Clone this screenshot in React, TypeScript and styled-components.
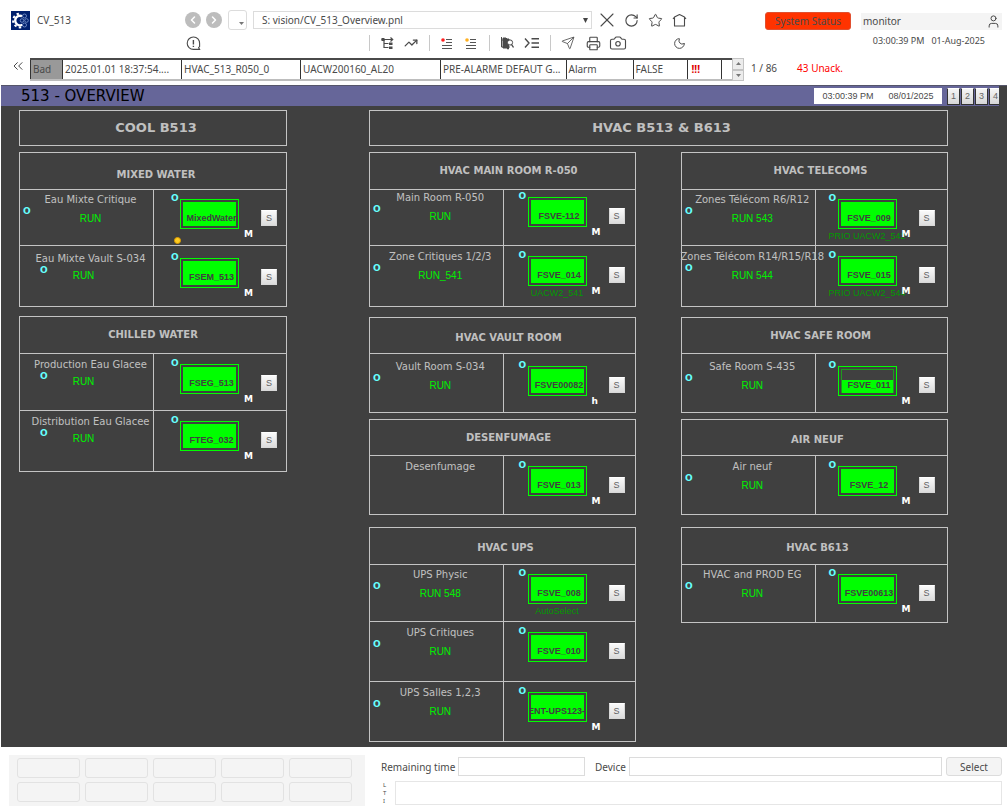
import React from "react";
import styled, { createGlobalStyle } from "styled-components";
import {
  Camera,
  ChevronLeft,
  ChevronRight,
  ChevronsLeft,
  Moon,
  Printer,
  RotateCw,
  Send,
  Star,
  TrendingUp,
  User,
  X,
} from "lucide-react";

const ui = `"Noto Sans", "Open Sans", sans-serif`;
const wide = `"DejaVu Sans", sans-serif`;
const plain = `"Liberation Sans", Arial, sans-serif`;

const color = {
  ink: "#4a4a4a",
  panel: "#404040",
  line: "#c4c4c4",
  label: "#c0c0c0",
  run: "#00f000",
  green: "#00ff00",
  note: "#009a00",
  cyan: "#66ffff",
  bar: "#666699",
};

const GlobalStyle = createGlobalStyle`
  * { box-sizing: border-box; }
  body { margin: 0; background: #fff; color: ${color.ink}; font: 10px/14px ${ui}; }
  button, input, select { font: inherit; color: inherit; margin: 0; padding: 0; }
  h1, h2, h3 { margin: 0; }
  svg { flex: none; }
`;

const Page = styled.div`
  min-width: 960px;
`;

/* ---------- top bar ---------- */

const Header = styled.header`
  display: grid;
  grid-template-columns: 174px 1fr 237px;
  column-gap: 0;
  padding: 9px 6px 0 11px;
`;

const Brand = styled.div`
  display: flex;
  align-items: center;
  gap: 7px;
  height: 22px;
`;

const Middle = styled.div`
  display: flex;
  flex-direction: column;
  gap: 1px;
  padding-right: 78px;
`;

const BarRow = styled.div`
  display: flex;
  align-items: center;
  height: 22px;
`;

const RoundButton = styled.button`
  display: flex;
  align-items: center;
  justify-content: center;
  width: 16px;
  height: 16px;
  margin-right: 5px;
  border: 0;
  border-radius: 50%;
  background: #bdbdbd;
  color: #fff;
`;

const HistoryButton = styled.button`
  display: flex;
  align-items: flex-end;
  justify-content: flex-end;
  width: 19px;
  height: 20px;
  margin: 0 6px 0 1px;
  padding: 0 2px 4px 0;
  border: 1px solid #dcdcdc;
  border-radius: 3px;
  background: #fff;
`;

const PathBox = styled.div`
  position: relative;
  flex: 1;
  margin-right: 7px;
`;

const PathSelect = styled.select`
  appearance: none;
  display: block;
  width: 100%;
  height: 18px;
  padding: 0 16px 0 8px;
  border: 1px solid #dcdcdc;
  border-radius: 0;
  background: #fff;
`;

const PathCaret = styled.svg`
  position: absolute;
  right: 4px;
  top: 7px;
  pointer-events: none;
`;

const IconButton = styled.button`
  display: flex;
  align-items: center;
  justify-content: center;
  flex: none;
  width: 16px;
  height: 16px;
  border: 0;
  background: none;
`;

const IconGroup = styled.div<{ $gap: number }>`
  display: flex;
  align-items: center;
  gap: ${(p) => p.$gap}px;
`;

const Tools = styled.div`
  display: flex;
  align-items: center;
  margin-left: auto;
`;

const ToolGroup = styled(IconGroup)`
  padding: 0 10px 0 9px;
  border-left: 1px solid #c8c8c8;
`;

const MoonSlot = styled.div`
  margin-left: 35px;
`;

const Session = styled.div`
  display: flex;
  flex-direction: column;
`;

const SessionRow = styled.div`
  display: flex;
  align-items: center;
  gap: 10px;
  height: 24px;
`;

const StatusButton = styled.button`
  flex: 0 0 86px;
  height: 18px;
  border: 1px solid #e05030;
  border-radius: 3px;
  background: #ff3300;
  white-space: nowrap;
`;

const UserBox = styled.div`
  display: flex;
  align-items: center;
  flex: 1;
  min-width: 0;
  height: 17px;
  padding: 0 1px 0 2px;
  background: #f4f4f4;
`;

const UserInput = styled.input`
  flex: 1;
  min-width: 0;
  border: 0;
  background: none;
`;

const Clock = styled.div`
  display: flex;
  justify-content: flex-end;
  gap: 7px;
  padding-right: 17px;
  font-size: 9px;
  line-height: 16px;
`;

/* ---------- alarm line ---------- */

const AlarmBar = styled.div`
  display: flex;
  align-items: flex-start;
  margin: 4px 0;
  padding-left: 10px;
`;

const AlarmList = styled.div`
  display: flex;
  flex: 1;
  height: 23px;
  margin-left: 4px;
  border-top: 2px solid #4a4a4a;
  border-bottom: 2px solid #bdbdbd;
`;

const AlarmTable = styled.table`
  flex: 1;
  height: 19px;
  width: 100%;
  table-layout: fixed;
  border-collapse: collapse;
`;

const AlarmCell = styled.td<{ $tone?: "bad" | "alert" }>`
  padding: 0 2px 1px;
  border-left: 1px solid #333;
  overflow: hidden;
  white-space: nowrap;
  text-overflow: ellipsis;
  background: ${(p) => (p.$tone === "bad" ? "#999" : "#fff")};
  color: ${(p) => (p.$tone === "alert" ? "#e00000" : color.ink)};
  font-weight: ${(p) => (p.$tone === "alert" ? "bold" : "normal")};
  text-indent: ${(p) => (p.$tone === "alert" ? "2px" : "0")};
`;

const Stepper = styled.div`
  display: flex;
  flex-direction: column;
  width: 12px;
  height: 23px;
  margin-top: -2px;
`;

const StepButton = styled.button`
  display: flex;
  align-items: center;
  justify-content: center;
  flex: 1;
  border: 1px solid #c4c4c4;
  background: #ececec;
`;

const AlarmCount = styled.div`
  display: flex;
  gap: 20px;
  flex: 0 0 264px;
  padding: 3px 0 0 7px;
`;

const Unacked = styled.span`
  color: #ff0000;
`;

/* ---------- process panel ---------- */

const Panel = styled.main`
  margin: 0 1px;
  background: ${color.panel};
  border-top: 1px solid #55556a;
`;

const TitleBar = styled.div`
  display: flex;
  align-items: center;
  height: 20px;
  margin-right: 8px;
  padding-left: 20px;
  background: ${color.bar};
  overflow: hidden;
`;

const PanelTitle = styled.h1`
  flex: 1;
  color: #000;
  font: 15px/20px ${wide};
`;

const PanelClock = styled.div`
  display: flex;
  align-items: center;
  justify-content: center;
  gap: 15px;
  width: 128px;
  height: 16px;
  margin-right: 5px;
  background: #fff;
  font: 9px/16px ${plain};
`;

const PageButtons = styled.div`
  display: flex;
  gap: 1px;
  width: 52px;
  overflow: hidden;
`;

const PageButton = styled.button`
  flex: 0 0 13px;
  height: 17px;
  border: 1px solid #333;
  border-top-color: #fff;
  background: linear-gradient(#f4f4f4, #d8d8d8);
  color: #666;
  font: 9px/14px ${plain};
`;

const Canvas = styled.div`
  display: grid;
  grid-template-columns: 268fr 579fr;
  column-gap: 82px;
  padding: 4px 59px 5px 18px;
`;

const Area = styled.section`
  display: flex;
  flex-direction: column;
  gap: 6px;
  min-width: 0;
`;

const AreaTitle = styled.h2`
  height: 36px;
  padding-left: 6px;
  border: 1px solid ${color.line};
  color: ${color.label};
  font: bold 13px/34px ${wide};
  text-align: center;
`;

const Columns = styled.div`
  display: grid;
  grid-template-columns: 1fr 1fr;
  column-gap: 45px;
`;

const Column = styled.div`
  display: flex;
  flex-direction: column;
  min-width: 0;
`;

const Card = styled.article<{ $before: number }>`
  margin-top: ${(p) => p.$before}px;
  border: 1px solid ${color.line};
`;

const CardTitle = styled.h3<{ $height: number; $lead: number; $drop: number }>`
  display: flex;
  align-items: center;
  justify-content: center;
  height: ${(p) => p.$height}px;
  padding: ${(p) => p.$drop}px 0 0 ${(p) => p.$lead}px;
  color: ${color.label};
  font: bold 10px/14px ${wide};
`;

const UnitRow = styled.div<{ $height: number }>`
  display: flex;
  min-height: ${(p) => p.$height}px;
  border-top: 1px solid ${color.line};
`;

const NameCell = styled.div<{ $inset: number }>`
  position: relative;
  display: flex;
  flex-direction: column;
  align-items: center;
  flex: 0 0 50%;
  width: 50%;
  padding: ${(p) => p.$inset - 6}px 0 0 8px;
`;

const UnitName = styled.span`
  position: relative;
  z-index: 1;
  color: ${color.label};
  font: 10px/14px ${wide};
  white-space: nowrap;
`;

const UnitState = styled.span<{ $near: boolean }>`
  margin-top: ${(p) => (p.$near ? 3 : 5)}px;
  padding-right: ${(p) => (p.$near ? 14 : 0)}px;
  color: ${color.run};
  font: 10px/14px ${plain};
`;

const Flag = styled.span`
  position: absolute;
  color: ${color.cyan};
  font: bold 9px/12px ${wide};
`;

const NameFlag = styled(Flag)<{ $inset: number; $near: boolean }>`
  left: ${(p) => (p.$near ? 20 : 3)}px;
  top: ${(p) => p.$inset + 6}px;
`;

const DeviceCell = styled.div<{ $inset: number; $indent: number }>`
  display: flex;
  align-items: flex-start;
  flex: 1;
  min-width: 0;
  padding: ${(p) => p.$inset}px 0 0 ${(p) => p.$indent}px;
  border-left: 1px solid ${color.line};
`;

const Device = styled.div`
  position: relative;
  flex: none;
`;

const DeviceFrame = styled.div`
  width: 59px;
  height: 30px;
  padding: 2px;
  border: 1px solid ${color.green};
  overflow: hidden;
`;

const DeviceFill = styled.div<{ $half: boolean }>`
  display: flex;
  justify-content: center;
  height: 24px;
  padding: 8px 0 0 4px;
  border: solid ${(p) => (p.$half ? "#1e9a1e" : color.green)};
  border-width: 1px 1px 0;
  background: ${(p) =>
    p.$half ? `linear-gradient(${color.panel} 10px, ${color.green} 10px)` : color.green};
  color: ${color.panel};
  font: bold 9px/14px ${plain};
  white-space: nowrap;
`;

const DeviceFlag = styled(Flag)`
  left: -9px;
  top: -7px;
`;

const Mode = styled.span`
  position: absolute;
  left: 64px;
  top: 29px;
  z-index: 1;
  color: #fff;
  font: bold 9px/12px ${wide};
`;

const Note = styled.span`
  position: absolute;
  left: -10px;
  right: -10px;
  top: 30px;
  color: ${color.note};
  font: 9px/14px ${plain};
  text-align: center;
  white-space: nowrap;
`;

const Lamp = styled.span`
  position: absolute;
  left: -6px;
  top: 38px;
  width: 7px;
  height: 7px;
  border: 1px solid #d89a00;
  border-radius: 50%;
  background: #ffcc22;
`;

const SelectButton = styled.button`
  flex: none;
  width: 16px;
  height: 16px;
  margin: 11px 0 0 22px;
  border: 1px solid #d8d8d8;
  border-top-color: #fff;
  background: linear-gradient(#fafafa, #dcdcdc);
  color: #606060;
  font: 9px/14px ${plain};
`;

/* ---------- bottom bar ---------- */

const Footer = styled.footer`
  display: grid;
  grid-template-columns: 356px 1fr;
  column-gap: 16px;
  padding: 8px 6px 4px 9px;
`;

const Pad = styled.div`
  display: grid;
  grid-template-columns: repeat(5, 1fr);
  grid-auto-rows: 20px;
  gap: 4px 5px;
  padding: 3px 13px 4px 8px;
  background: #f4f4f4;
`;

const PadButton = styled.button`
  border: 1px solid #e2e2e2;
  border-radius: 3px;
  background: #f4f4f4;
`;

const FooterForm = styled.div`
  display: flex;
  flex-direction: column;
  gap: 5px;
  padding-top: 2px;
`;

const FormRow = styled.div`
  display: flex;
  align-items: center;
`;

const FieldLabel = styled.label<{ $width: number }>`
  flex: 0 0 ${(p) => p.$width}px;
  white-space: nowrap;
`;

const Field = styled.input<{ $width?: number }>`
  flex: ${(p) => (p.$width ? `0 0 ${p.$width}px` : "1")};
  min-width: 0;
  height: 19px;
  border: 1px solid #dcdcdc;
  background: #fff;
`;

const TimeField = styled(Field)`
  margin-right: 10px;
`;

const SubmitButton = styled.button`
  width: 56px;
  height: 19px;
  margin-left: 4px;
  border: 1px solid #dcdcdc;
  border-radius: 3px;
  background: #f4f4f4;
`;

const LogMarks = styled.div`
  flex: 0 0 14px;
  padding-left: 2px;
  font-size: 6px;
  line-height: 8px;
`;

const LogField = styled(Field)`
  height: 24px;
  border: 1px solid #e6e6e6;
`;

/* ---------- drawings ---------- */

const Logo = () => (
  <svg width="19" height="19" viewBox="0 0 19 19" aria-hidden="true">
    <rect width="19" height="19" fill="#00206e" />
    <circle cx="9" cy="9.5" r="4.8" fill="none" stroke="#fff" strokeWidth="2.4" strokeDasharray="19 12" transform="rotate(62 9 9.5)" />
    <circle cx="9" cy="9.5" r="6.9" fill="none" stroke="#fff" strokeWidth="2" strokeDasharray="2.4 2.4 2.4 2.4 2.4 2.4 2.4 2.4 2.4 30" pathLength="43" transform="rotate(80 9 9.5)" />
    <g fill="none" stroke="#7f9bd0" strokeWidth="0.8">
      <circle cx="13.5" cy="5" r="2" />
      <circle cx="15.5" cy="9.5" r="1.8" />
      <circle cx="13.5" cy="14" r="2" />
      <circle cx="11" cy="9.5" r="1.8" />
    </g>
  </svg>
);

const Triangle = ({ up = false, size = 5 }: { up?: boolean; size?: number }) => (
  <svg width={size} height="3" viewBox="0 0 6 3" preserveAspectRatio="none" aria-hidden="true">
    <path d={up ? "M0 3L3 0L6 3Z" : "M0 0L3 3L6 0Z"} fill="#777" />
  </svg>
);

const HomeIcon = () => (
  <svg width="15" height="15" viewBox="0 0 15 15" fill="none" stroke="#4a4a4a" strokeWidth="1.1" strokeLinejoin="round">
    <path d="M1 6L2.5 4L7.5 1.5L12.5 4L14 6M2.5 4.5V13H12.5V4.5" />
  </svg>
);

const AlertIcon = () => (
  <svg width="15" height="15" viewBox="0 0 15 15" fill="none" stroke="#4a4a4a" strokeWidth="1.1">
    <path d="M13.6 13.4H7.5A6.2 6.2 0 1 1 13.6 7.5V10.5L12.6 11.6L13.6 13.4Z" />
    <path d="M7.4 4V8.5M7.4 9.8V11" strokeWidth="1.4" />
  </svg>
);

const TreeIcon = () => (
  <svg width="13" height="13" viewBox="0 0 13 13" fill="none" stroke="#4a4a4a" strokeWidth="1.2">
    <path d="M0.5 2.5H5M3 2.5V10.5H7.5M3 6.5H7.5M5 2.5H11.5M9.5 0.5L11.7 2.5L9.5 4.5" />
    <path d="M0.5 1H3.5V4H0.5ZM8 5.5H11.5V8H8ZM8 9.5H11.5V12H8Z" fill="#4a4a4a" stroke="none" />
  </svg>
);

const ListIcon = ({ dot }: { dot: string }) => (
  <svg width="12" height="11" viewBox="0 0 12 11" fill="none" stroke="#555" strokeWidth="1">
    <path d="M5 1.5H11M5 4.5H11M1 7.5H11M1 10.5H11" />
    <circle cx="2" cy="2" r="1.8" fill={dot} stroke="none" />
  </svg>
);

const FindTreeIcon = () => (
  <svg width="14" height="14" viewBox="0 0 14 14" fill="none" stroke="#4a4a4a" strokeWidth="1">
    <path d="M1.5 1V11H4M1.5 4H4" />
    <path d="M3 2H6L7 3H9V5L7 8L9 10V12H3Z" fill="#4a4a4a" />
    <circle cx="10" cy="6.5" r="2.6" fill="#fff" />
    <path d="M11.6 8.6L13.5 11.5M7 12.5H9" strokeWidth="1.3" />
  </svg>
);

const IndentIcon = () => (
  <svg width="16" height="12" viewBox="0 0 16 12" fill="none" stroke="#4a4a4a" strokeWidth="1.4">
    <path d="M1 1.5L5 6L1 10.5M7.5 1.8H15M7.5 6H15M7.5 10.2H15" />
  </svg>
);

/* ---------- data ---------- */

interface Unit {
  name: string;
  state?: string;
  device: string;
  mode?: string;
  note?: string;
  height: number;
  inset: number;
  near?: boolean;
  half?: boolean;
  lamp?: boolean;
}

interface Group {
  title: string;
  before: number;
  head: number;
  lead: number;
  drop: number;
  units: Unit[];
}

const coolGroups: Group[] = [
  {
    title: "MIXED WATER", before: 0, head: 36, lead: 6, drop: 8,
    units: [
      { name: "Eau Mixte Critique", state: "RUN", device: "MixedWater", mode: "M", height: 56, inset: 9, lamp: true },
      { name: "Eau Mixte Vault S-034", state: "RUN", device: "FSEM_513", mode: "M", height: 61, inset: 12, near: true },
    ],
  },
  {
    title: "CHILLED WATER", before: 9, head: 36, lead: 0, drop: 0,
    units: [
      { name: "Production Eau Glacee", state: "RUN", device: "FSEG_513", mode: "M", height: 57, inset: 10, near: true },
      { name: "Distribution Eau Glacee", state: "RUN", device: "FTEG_032", mode: "M", height: 61, inset: 10, near: true },
    ],
  },
];

const roomGroups: Group[] = [
  {
    title: "HVAC MAIN ROOM R-050", before: 0, head: 36, lead: 12, drop: 0,
    units: [
      { name: "Main Room R-050", state: "RUN", device: "FSVE-112", mode: "M", height: 56, inset: 7 },
      { name: "Zone Critiques 1/2/3", state: "RUN_541", device: "FSVE_014", mode: "M", note: "UACW2_541", height: 61, inset: 10 },
    ],
  },
  {
    title: "HVAC VAULT ROOM", before: 10, head: 35, lead: 12, drop: 4,
    units: [{ name: "Vault Room S-034", state: "RUN", device: "FSVE00082", mode: "h", height: 59, inset: 12 }],
  },
  {
    title: "DESENFUMAGE", before: 6, head: 35, lead: 12, drop: 0,
    units: [{ name: "Desenfumage", device: "FSVE_013", mode: "M", height: 59, inset: 10 }],
  },
  {
    title: "HVAC UPS", before: 12, head: 36, lead: 6, drop: 4,
    units: [
      { name: "UPS Physic", state: "RUN 548", device: "FSVE_008", note: "AutoSelect", height: 57, inset: 9 },
      { name: "UPS Critiques", state: "RUN", device: "FSVE_010", height: 60, inset: 10 },
      { name: "UPS Salles 1,2,3", state: "RUN", device: "ENT-UPS123-5", mode: "M", height: 60, inset: 10 },
    ],
  },
];

const serviceGroups: Group[] = [
  {
    title: "HVAC TELECOMS", before: 0, head: 36, lead: 12, drop: 0,
    units: [
      { name: "Zones Télécom R6/R12", state: "RUN 543", device: "FSVE_009", mode: "M", note: "PRIO UACW2_542", height: 56, inset: 9 },
      { name: "Zones Télécom R14/R15/R18", state: "RUN 544", device: "FSVE_015", mode: "M", note: "PRIO UACW2_544", height: 61, inset: 10 },
    ],
  },
  {
    title: "HVAC SAFE ROOM", before: 10, head: 35, lead: 12, drop: 0,
    units: [{ name: "Safe Room S-435", state: "RUN", device: "FSVE_011", mode: "M", height: 59, inset: 12, half: true }],
  },
  {
    title: "AIR NEUF", before: 6, head: 35, lead: 6, drop: 4,
    units: [{ name: "Air neuf", state: "RUN", device: "FSVE_12", mode: "M", height: 59, inset: 10 }],
  },
  {
    title: "HVAC B613", before: 12, head: 36, lead: 6, drop: 4,
    units: [{ name: "HVAC and PROD EG", state: "RUN", device: "FSVE00613", mode: "M", height: 58, inset: 9 }],
  },
];

const UnitLine = ({ unit, indent }: { unit: Unit; indent: number }) => (
  <UnitRow $height={unit.height}>
    <NameCell $inset={unit.inset}>
      <UnitName>{unit.name}</UnitName>
      {unit.state && (
        <>
          <UnitState $near={!!unit.near}>{unit.state}</UnitState>
          <NameFlag $inset={unit.inset} $near={!!unit.near}>O</NameFlag>
        </>
      )}
    </NameCell>
    <DeviceCell $inset={unit.inset} $indent={indent}>
      <Device>
        <DeviceFrame>
          <DeviceFill $half={!!unit.half}>{unit.device}</DeviceFill>
        </DeviceFrame>
        <DeviceFlag>O</DeviceFlag>
        {unit.note && <Note>{unit.note}</Note>}
        {unit.mode && <Mode>{unit.mode}</Mode>}
        {unit.lamp && <Lamp />}
      </Device>
      <SelectButton>S</SelectButton>
    </DeviceCell>
  </UnitRow>
);

const GroupColumn = ({ groups, indent }: { groups: Group[]; indent: number }) => (
  <Column>
    {groups.map((g) => (
      <Card key={g.title} $before={g.before}>
        <CardTitle $height={g.head} $lead={g.lead} $drop={g.drop}>{g.title}</CardTitle>
        {g.units.map((u) => (
          <UnitLine key={u.name} unit={u} indent={indent} />
        ))}
      </Card>
    ))}
  </Column>
);

export default function App() {
  return (
    <Page>
      <GlobalStyle />
      <Header>
        <Brand>
          <Logo />
          <span>CV_513</span>
        </Brand>
        <Middle>
          <BarRow>
            <RoundButton aria-label="Back"><ChevronLeft size={12} strokeWidth={3} /></RoundButton>
            <RoundButton aria-label="Forward"><ChevronRight size={12} strokeWidth={3} /></RoundButton>
            <HistoryButton aria-label="History"><Triangle /></HistoryButton>
            <PathBox>
              <PathSelect aria-label="Panel" defaultValue="overview">
                <option value="overview">S: vision/CV_513_Overview.pnl</option>
              </PathSelect>
              <PathCaret width="5" height="5" viewBox="0 0 5 5" aria-hidden="true">
                <path d="M0 0H5L2.5 5Z" fill="#444" />
              </PathCaret>
            </PathBox>
            <IconGroup $gap={8}>
              <IconButton aria-label="Close"><X size={24} strokeWidth={1.1} /></IconButton>
              <IconButton aria-label="Reload"><RotateCw size={15} strokeWidth={1.8} /></IconButton>
              <IconButton aria-label="Favourite"><Star size={15} strokeWidth={1.6} /></IconButton>
              <IconButton aria-label="Home"><HomeIcon /></IconButton>
            </IconGroup>
          </BarRow>
          <BarRow>
            <IconButton aria-label="Alerts"><AlertIcon /></IconButton>
            <Tools>
              <ToolGroup $gap={8}>
                <IconButton aria-label="Tree"><TreeIcon /></IconButton>
                <IconButton aria-label="Trend"><TrendingUp size={14} strokeWidth={2.2} /></IconButton>
              </ToolGroup>
              <ToolGroup $gap={8}>
                <IconButton aria-label="Alarm list"><ListIcon dot="#ff2020" /></IconButton>
                <IconButton aria-label="Event list"><ListIcon dot="#ffb020" /></IconButton>
              </ToolGroup>
              <ToolGroup $gap={9}>
                <IconButton aria-label="Find device"><FindTreeIcon /></IconButton>
                <IconButton aria-label="Details"><IndentIcon /></IconButton>
              </ToolGroup>
              <ToolGroup $gap={9}>
                <IconButton aria-label="Send"><Send size={14} strokeWidth={1.4} /></IconButton>
                <IconButton aria-label="Print"><Printer size={15} strokeWidth={1.8} /></IconButton>
                <IconButton aria-label="Snapshot"><Camera size={18} strokeWidth={1.5} /></IconButton>
              </ToolGroup>
              <MoonSlot>
                <IconButton aria-label="Dark mode"><Moon size={13} strokeWidth={1.8} /></IconButton>
              </MoonSlot>
            </Tools>
          </BarRow>
        </Middle>
        <Session>
          <SessionRow>
            <StatusButton>System Status</StatusButton>
            <UserBox>
              <UserInput aria-label="User" defaultValue="monitor" />
              <User size={15} strokeWidth={1.6} />
            </UserBox>
          </SessionRow>
          <Clock>
            <span>03:00:39 PM</span>
            <span>01-Aug-2025</span>
          </Clock>
        </Session>
      </Header>

      <AlarmBar>
        <IconButton aria-label="Collapse"><ChevronsLeft size={16} strokeWidth={1.5} /></IconButton>
        <AlarmList>
          <AlarmTable>
            <colgroup>
              <col width="32" />
              <col width="119" />
              <col width="119" />
              <col width="140" />
              <col />
              <col width="67" />
              <col width="54" />
              <col width="34" />
              <col width="11" />
            </colgroup>
            <tbody>
              <tr>
                <AlarmCell $tone="bad">Bad</AlarmCell>
                <AlarmCell>2025.01.01 18:37:54....</AlarmCell>
                <AlarmCell>HVAC_513_R050_0</AlarmCell>
                <AlarmCell>UACW200160_AL20</AlarmCell>
                <AlarmCell>PRE-ALARME DEFAUT G...</AlarmCell>
                <AlarmCell>Alarm</AlarmCell>
                <AlarmCell>FALSE</AlarmCell>
                <AlarmCell $tone="alert">!!!</AlarmCell>
                <AlarmCell />
              </tr>
            </tbody>
          </AlarmTable>
          <Stepper>
            <StepButton aria-label="Previous alarm"><Triangle up /></StepButton>
            <StepButton aria-label="Next alarm"><Triangle /></StepButton>
          </Stepper>
        </AlarmList>
        <AlarmCount>
          <span>1 / 86</span>
          <Unacked>43 Unack.</Unacked>
        </AlarmCount>
      </AlarmBar>

      <Panel>
        <TitleBar>
          <PanelTitle>513 - OVERVIEW</PanelTitle>
          <PanelClock>
            <span>03:00:39 PM</span>
            <span>08/01/2025</span>
          </PanelClock>
          <PageButtons>
            {[1, 2, 3, 4].map((n) => (
              <PageButton key={n}>{n}</PageButton>
            ))}
          </PageButtons>
        </TitleBar>
        <Canvas>
          <Area>
            <AreaTitle>COOL B513</AreaTitle>
            <GroupColumn groups={coolGroups} indent={26} />
          </Area>
          <Area>
            <AreaTitle>HVAC B513 &amp; B613</AreaTitle>
            <Columns>
              <GroupColumn groups={roomGroups} indent={24} />
              <GroupColumn groups={serviceGroups} indent={22} />
            </Columns>
          </Area>
        </Canvas>
      </Panel>

      <Footer>
        <Pad>
          {Array.from({ length: 10 }, (_, i) => (
            <PadButton key={i} aria-label={`Action ${i + 1}`} />
          ))}
        </Pad>
        <FooterForm>
          <FormRow>
            <FieldLabel htmlFor="remaining" $width={77}>Remaining time</FieldLabel>
            <TimeField id="remaining" $width={127} />
            <FieldLabel htmlFor="device" $width={34}>Device</FieldLabel>
            <Field id="device" />
            <SubmitButton>Select</SubmitButton>
          </FormRow>
          <FormRow>
            <LogMarks>
              <div>L</div>
              <div>T</div>
              <div>I</div>
            </LogMarks>
            <LogField aria-label="Log" />
          </FormRow>
        </FooterForm>
      </Footer>
    </Page>
  );
}
